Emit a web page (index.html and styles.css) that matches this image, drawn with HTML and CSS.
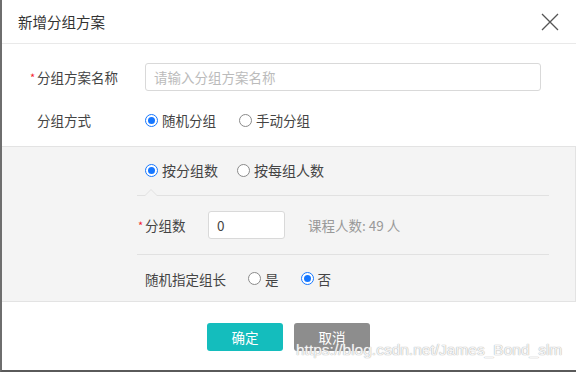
FILE: index.html
```html
<!DOCTYPE html>
<html lang="zh-CN">
<head>
    <meta charset="UTF-8">
    <meta name="viewport" content="width=device-width, initial-scale=1.0">
    <title>新增分组方案</title>
    <link rel="stylesheet" href="styles.css">
</head>
<body>

    <div class="dialog">
        <div class="dialog-header">
            <span class="dialog-title">新增分组方案</span>
            <svg class="close" width="18" height="18" viewBox="0 0 18 18">
                <path d="M1 1 L17 17 M17 1 L1 17" stroke="#555" stroke-width="1.3" fill="none"/>
            </svg>
        </div>

        <div class="dialog-body">
            <div class="form-row">
                <label class="form-label"><span class="req">*</span>分组方案名称</label>
                <input class="input-field name-input" type="text" placeholder="请输入分组方案名称">
            </div>

            <div class="form-row">
                <label class="form-label">分组方式</label>
                <div class="radio-group">
                    <span class="radio checked"><i></i>随机分组</span>
                    <span class="radio"><i></i>手动分组</span>
                </div>
            </div>

            <div class="sub-panel">
                <div class="sub-row tabs">
                    <span class="radio checked"><i></i>按分组数</span>
                    <span class="radio"><i></i>按每组人数</span>
                    <span class="caret"></span>
                </div>
                <div class="sub-row count-row">
                    <label class="sub-label"><span class="req">*</span>分组数</label>
                    <input class="input-field count-input" type="text" value="0">
                    <span class="hint">课程人数: 49 人</span>
                </div>
                <div class="sub-row leader-row">
                    <label class="sub-label">随机指定组长</label>
                    <span class="radio"><i></i>是</span>
                    <span class="radio checked"><i></i>否</span>
                </div>
            </div>
        </div>

        <div class="dialog-footer">
            <button class="btn btn-ok">确定</button>
            <button class="btn btn-cancel">取消</button>
        </div>

        <div class="watermark">https://blog.csdn.net/James_Bond_slm</div>
    </div>

</body>
</html>
```

FILE: styles.css
```css
body {
    margin: 0;
    font-family: "Noto Sans CJK SC", "Noto Sans", sans-serif;
    color: #444;
    background-color: #fff;
}

.dialog {
    position: relative;
    width: 576px;
    height: 372px;
    box-sizing: border-box;
    border-left: 2px solid #6e6e6e;
    border-bottom: 2px solid #5a5a5a;
    background-color: #fff;
    overflow: hidden;
}

.dialog-header {
    height: 43px;
    border-bottom: 1px solid #e9e9e9;
    display: flex;
    align-items: center;
    justify-content: space-between;
    padding: 0 17px 0 16px;
}

.dialog-title {
    font-size: 14.5px;
    color: #333;
}

.close {
    display: block;
}

.dialog-body {
    padding-top: 19px;
}

.form-row {
    display: flex;
    align-items: center;
    height: 28px;
    margin-bottom: 15px;
}

.form-row:nth-child(2) {
    margin-bottom: 12px;
}

.form-label {
    width: 108px;
    padding-left: 35px;
    font-size: 13.5px;
    color: #444;
    position: relative;
    flex-shrink: 0;
}

.req {
    color: #f5222d;
    font-size: 11px;
    position: absolute;
    margin-left: -7px;
    margin-top: 2px;
}

.input-field {
    height: 28px;
    box-sizing: border-box;
    border: 1px solid #d9d9d9;
    border-radius: 3px;
    background-color: #fff;
    font-family: inherit;
    font-size: 13.5px;
    color: #444;
    padding: 0 8px;
    outline: none;
}

.input-field::placeholder {
    color: #bbb;
}

.name-input {
    width: 396px;
}

.radio-group {
    display: flex;
    align-items: center;
}

.radio {
    display: inline-flex;
    align-items: center;
    font-size: 13.5px;
    color: #444;
    margin-right: 23px;
}

.radio i {
    width: 13px;
    height: 13px;
    box-sizing: border-box;
    border: 1px solid #8a8a8a;
    border-radius: 50%;
    background-color: #fff;
    margin-right: 4px;
    position: relative;
}

.radio.checked i {
    border-color: #1677ff;
}

.radio.checked i::after {
    content: "";
    position: absolute;
    left: 2px;
    top: 2px;
    width: 7px;
    height: 7px;
    border-radius: 50%;
    background-color: #1677ff;
}

.sub-panel {
    border-top: 1px solid #e3e3e3;
    border-bottom: 1px solid #e3e3e3;
    border-right: 1px solid #e3e3e3;
    background-color: #f4f4f4;
    padding: 0 26px 0 135px;
    height: 156px;
    box-sizing: border-box;
}

.sub-row {
    display: flex;
    align-items: center;
    padding-left: 8px;
}

.tabs {
    height: 49px;
    border-bottom: 1px solid #e1e1e1;
    position: relative;
    box-sizing: border-box;
    padding-bottom: 2px;
}

.tabs .radio {
    font-size: 14px;
    margin-right: 19px;
}

.caret {
    position: absolute;
    left: 7px;
    bottom: -1px;
    width: 0;
    height: 0;
    border-left: 7px solid transparent;
    border-right: 7px solid transparent;
    border-bottom: 7px solid #e1e1e1;
}

.caret::after {
    content: "";
    position: absolute;
    left: -6px;
    top: 1px;
    border-left: 6px solid transparent;
    border-right: 6px solid transparent;
    border-bottom: 6px solid #f4f4f4;
}

.count-row {
    height: 59px;
    border-bottom: 1px solid #e1e1e1;
    box-sizing: border-box;
}

.sub-label {
    font-size: 13.5px;
    color: #444;
    position: relative;
}

.count-row .sub-label {
    width: 63px;
}

.count-input {
    width: 77px;
    margin-right: 23px;
}

.hint {
    font-size: 13.5px;
    color: #999;
}

.leader-row {
    height: 47px;
}

.leader-row .sub-label {
    margin-right: 22px;
}

.leader-row .radio {
    margin-right: 22px;
}

.dialog-footer {
    display: flex;
    justify-content: center;
    gap: 11px;
    padding-top: 21px;
    padding-right: 1px;
}

.btn {
    width: 76px;
    height: 28px;
    border: none;
    border-radius: 3px;
    color: #fff;
    font-family: inherit;
    font-size: 13.5px;
    padding: 0;
}

.btn-ok {
    background-color: #14bdbd;
}

.btn-cancel {
    background-color: #8d8d8d;
}

.watermark {
    position: absolute;
    left: 294px;
    top: 341px;
    font-family: "Liberation Sans", Arial, sans-serif;
    font-size: 15.5px;
    color: rgba(255, 255, 255, 0.9);
    text-shadow: 0 0 1px #aaa, 0 0 1px #bbb;
    white-space: nowrap;
}
```
